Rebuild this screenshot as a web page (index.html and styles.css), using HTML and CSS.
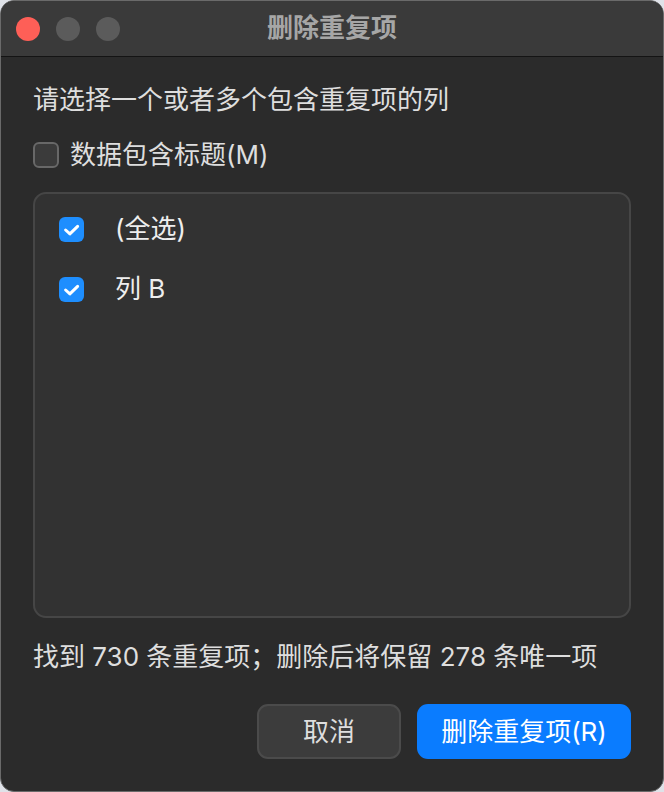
FILE: index.html
```html
<!DOCTYPE html>
<html lang="zh-CN">
<head>
<meta charset="utf-8">
<title>删除重复项</title>
<link rel="stylesheet" href="styles.css">
</head>
<body>
<div class="window">
  <div class="titlebar">
    <div class="lights">
      <span class="light red"></span>
      <span class="light gray"></span>
      <span class="light gray"></span>
    </div>
    <div class="title">删除重复项</div>
    <div class="spacer"></div>
  </div>
  <div class="content">
    <div class="prompt">请选择一个或者多个包含重复项的列</div>
    <label class="check-row">
      <span class="box"></span>
      <span class="check-label">数据包含标题(M)</span>
    </label>
    <div class="list">
      <div class="list-row">
        <span class="box checked"><svg viewBox="0 0 25 25" width="25" height="25"><path d="M6.6 13 L10.9 16.9 L18.6 9.4" fill="none" stroke="#fff" stroke-width="3" stroke-linecap="round" stroke-linejoin="round"/></svg></span>
        <span class="list-label">(全选)</span>
      </div>
      <div class="list-row">
        <span class="box checked"><svg viewBox="0 0 25 25" width="25" height="25"><path d="M6.6 13 L10.9 16.9 L18.6 9.4" fill="none" stroke="#fff" stroke-width="3" stroke-linecap="round" stroke-linejoin="round"/></svg></span>
        <span class="list-label">列 B</span>
      </div>
    </div>
    <div class="summary">找到 730 条重复项；删除后将保留 278 条唯一项</div>
    <div class="actions">
      <button class="btn btn-cancel">取消</button>
      <button class="btn btn-primary">删除重复项(R)</button>
    </div>
  </div>
</div>
</body>
</html>
```
FILE: styles.css
```css
* { box-sizing: border-box; }
html, body {
  margin: 0;
  padding: 0;
  background: #dfe2e8;
}
body {
  font-family: Inter, "Noto Sans CJK SC", "Noto Sans", sans-serif;
  color: #dedede;
}
.window {
  width: 664px;
  height: 792px;
  border: 1px solid #6a6a6a;
  border-radius: 14px;
  overflow: hidden;
  background: #2b2b2b;
  display: flex;
  flex-direction: column;
}
.titlebar {
  height: 56px;
  flex: none;
  background: #3a3a3a;
  border-bottom: 1px solid #141414;
  display: grid;
  grid-template-columns: 1fr auto 1fr;
  align-items: center;
  padding: 0 15px;
}
.lights {
  display: flex;
  gap: 16px;
  align-items: center;
}
.light {
  width: 24px;
  height: 24px;
  border-radius: 50%;
  display: block;
}
.light.red { background: #fe5f57; }
.light.gray { background: #5b5b5b; }
.title {
  font-size: 26px;
  font-weight: 700;
  color: #a6a6a6;
  line-height: 30px;
  margin-top: -1px;
}
.content {
  flex: 1;
  display: flex;
  flex-direction: column;
  padding: 25px 32px 32px 32px;
}
.prompt {
  font-size: 26px;
  line-height: 36px;
}
.check-row {
  display: flex;
  align-items: center;
  margin-top: 19px;
  height: 36px;
}
.box {
  width: 26px;
  height: 26px;
  border-radius: 6px;
  border: 2px solid #686868;
  background: #3b3b3b;
  display: flex;
  align-items: center;
  justify-content: center;
  flex: none;
}
.box.checked {
  width: 25px;
  height: 25px;
  border: none;
  background: #1e8efe;
}
.box svg { display: block; }
.check-label {
  font-size: 26px;
  line-height: 36px;
  margin-left: 11px;
}
.list {
  margin-top: 19px;
  height: 426px;
  border: 2px solid #464646;
  border-radius: 13px;
  background: #323232;
  padding: 17px 24px;
  display: flex;
  flex-direction: column;
  gap: 24px;
}
.list-row {
  display: flex;
  align-items: center;
  height: 36px;
}
.list-label {
  font-size: 26px;
  line-height: 36px;
  margin-left: 31px;
  color: #eeeeee;
}
.summary {
  margin-top: 21px;
  font-size: 26px;
  line-height: 36px;
}
.actions {
  margin-top: auto;
  display: flex;
  justify-content: flex-end;
  gap: 16px;
}
.btn {
  height: 55px;
  border-radius: 11px;
  font-family: inherit;
  font-size: 26px;
  line-height: 36px;
  padding: 0;
  cursor: default;
}
.btn-cancel {
  width: 144px;
  background: #3c3c3c;
  border: 2px solid #4b4b4b;
  color: #dedede;
}
.btn-primary {
  width: 214px;
  background: #0a7cff;
  border: none;
  color: #ffffff;
}
```
